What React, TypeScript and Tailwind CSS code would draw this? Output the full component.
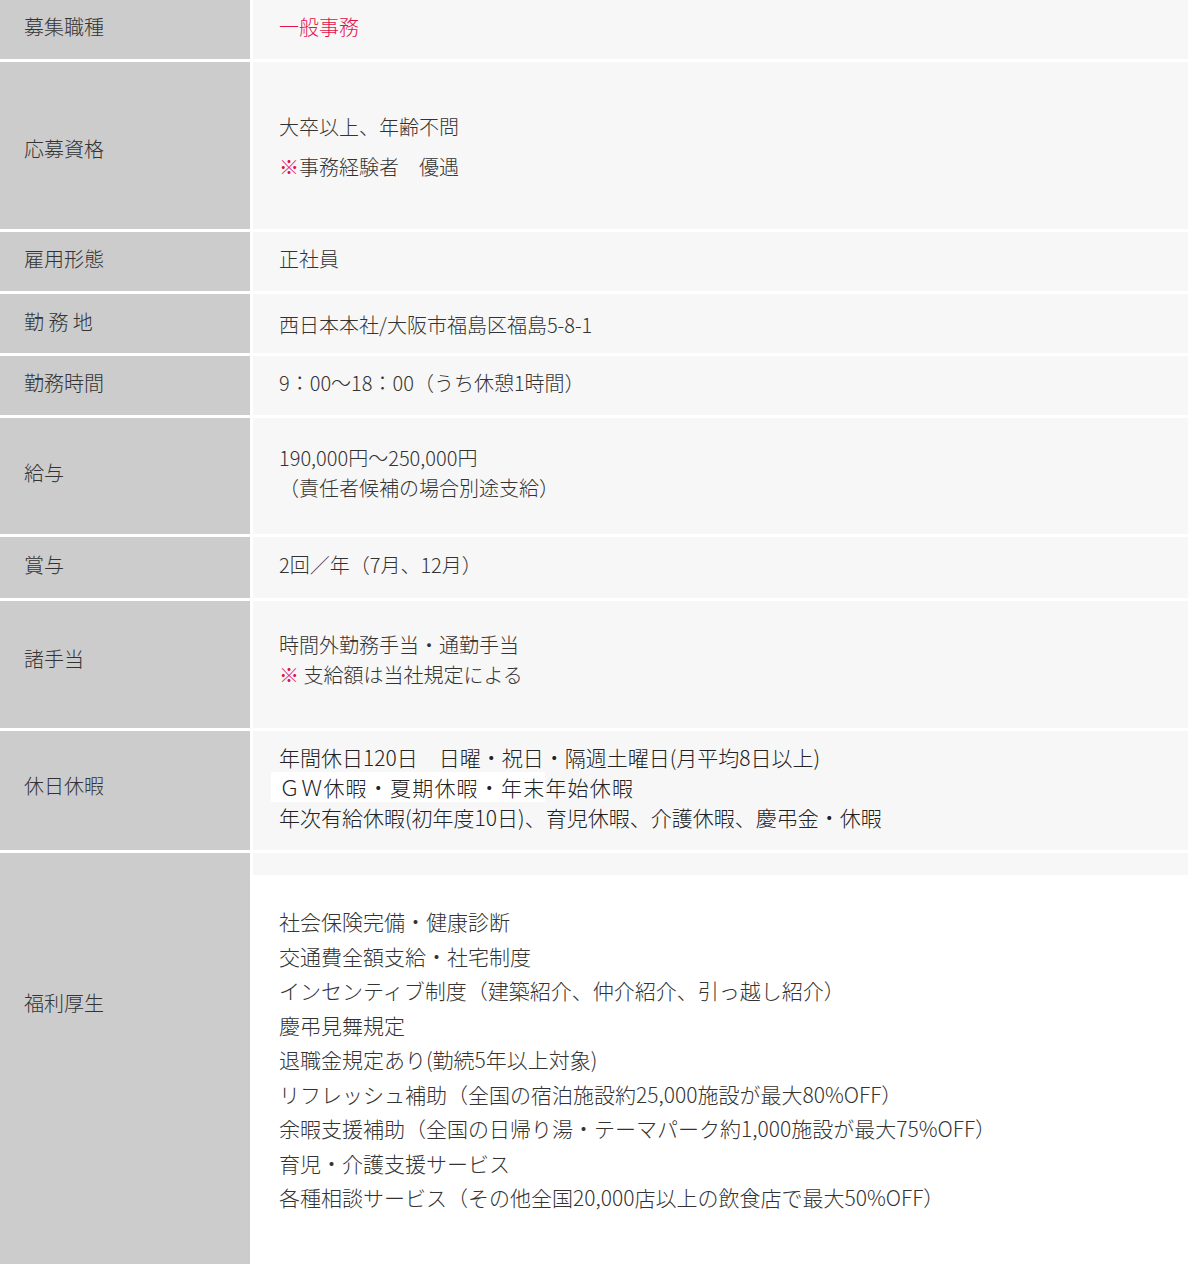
import type { ReactNode } from "react";

const font = { fontFamily: '"Noto Sans CJK JP", "Noto Sans", sans-serif' };

interface RowProps {
  label: ReactNode;
  height: string;
  labelPad?: string;
  contentPad?: string;
  children: ReactNode;
}

function Row({ label, height, labelPad = "pb-[6px]", contentPad = "pb-[6px]", children }: RowProps) {
  return (
    <div className={`flex gap-[3px] ${height}`}>
      <div className={`w-[250px] shrink-0 bg-[#cccccc] flex items-center pl-6 text-[20px] leading-[30px] text-[#333] ${labelPad}`}>
        {label}
      </div>
      <div className={`flex-1 bg-[#f7f7f7] flex flex-col justify-center pl-[26px] text-[20px] leading-[30px] text-[#333] ${contentPad}`}>
        {children}
      </div>
    </div>
  );
}

export default function App() {
  return (
    <div className="w-[1188px] h-[1264px] overflow-hidden bg-white font-light" style={font}>
      <div className="flex flex-col gap-[3px]">
        {/* 募集職種 */}
        <Row label="募集職種" height="h-[59px]">
          <p className="text-[#e4124b]">一般事務</p>
        </Row>

        {/* 応募資格 */}
        <Row label="応募資格" height="h-[167px]" labelPad="pt-[6px]" contentPad="pt-[3px]">
          <div className="flex flex-col gap-[10px]">
            <p>大卒以上、年齢不問</p>
            <p>
              <span className="text-[#e4124b]">※</span>事務経験者　優遇
            </p>
          </div>
        </Row>

        <Row label="雇用形態" height="h-[59px]">
          <p>正社員</p>
        </Row>

        <Row label="勤 務 地" height="h-[59px]" labelPad="pb-[4px]" contentPad="pt-[2px]">
          <p>西日本本社/大阪市福島区福島5-8-1</p>
        </Row>

        <Row label="勤務時間" height="h-[59px]">
          <p>9：00～18：00（うち休憩1時間）</p>
        </Row>

        <Row label="給与" height="h-[116px]">
          <p>190,000円～250,000円</p>
          <p>（責任者候補の場合別途支給）</p>
        </Row>

        <Row label="賞与" height="h-[61px]">
          <p>2回／年（7月、12月）</p>
        </Row>

        <Row label="諸手当" height="h-[127px]" labelPad="pb-[12px]" contentPad="pb-[10px]">
          <p>時間外勤務手当・通勤手当</p>
          <p>
            <span className="text-[#e4124b]">※</span> 支給額は当社規定による
          </p>
        </Row>

        {/* 休日休暇 */}
        <Row label="休日休暇" height="h-[119px]" labelPad="pb-[10px]" contentPad="pb-[8px]">
          <div className="text-[21px] leading-[30px] text-[#222]">
            <p>年間休日120日　日曜・祝日・隔週土曜日(月平均8日以上)</p>
            <p className="tracking-[1.2px]">
              <span className="bg-white -ml-2 pl-2">
                ＧＷ休暇・夏期休暇・年末
              </span>
              年始休暇
            </p>
            <p>年次有給休暇(初年度10日)、育児休暇、介護休暇、慶弔金・休暇</p>
          </div>
        </Row>

        {/* 福利厚生 */}
        <div className="flex gap-[3px] h-[420px]">
          <div className="w-[250px] shrink-0 bg-[#cccccc] pl-6 pt-[135px] text-[20px] leading-[30px] text-[#333]">
            福利厚生
          </div>
          <div className="flex-1 bg-white flex flex-col text-[21px] leading-[34.5px] text-[#333]">
            <div className="h-[22px] bg-[#f7f7f7]" />
            <div className="pl-[26px] pt-[29px] flex flex-col">
              <p>社会保険完備・健康診断</p>
              <p>交通費全額支給・社宅制度</p>
              <p>インセンティブ制度（建築紹介、仲介紹介、引っ越し紹介）</p>
              <p>慶弔見舞規定</p>
              <p>退職金規定あり(勤続5年以上対象)</p>
              <p>リフレッシュ補助（全国の宿泊施設約25,000施設が最大80%OFF）</p>
              <p>余暇支援補助（全国の日帰り湯・テーマパーク約1,000施設が最大75%OFF）</p>
              <p>育児・介護支援サービス</p>
              <p>各種相談サービス（その他全国20,000店以上の飲食店で最大50%OFF）</p>
            </div>
          </div>
        </div>
      </div>
    </div>
  );
}
